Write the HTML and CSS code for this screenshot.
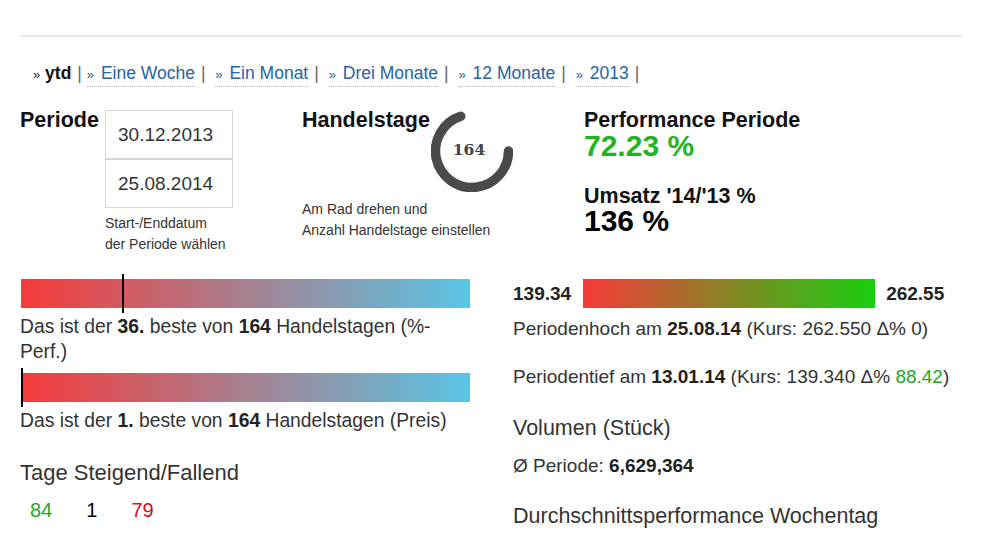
FILE: index.html
```html
<!DOCTYPE html>
<html lang="de">
<head>
<meta charset="utf-8">
<title>Performance Periode</title>
<link rel="stylesheet" href="styles.css">
</head>
<body>
<div class="page">
  <div class="rule"></div>

  <nav class="ranges">
    <span class="current"><span class="raquo">»</span> <b>ytd</b></span><span class="sep first">|</span>
    <a href="#"><span class="raquo">»</span> Eine Woche</a><span class="sep">|</span>
    <a href="#"><span class="raquo">»</span> Ein Monat</a><span class="sep">|</span>
    <a href="#"><span class="raquo">»</span> Drei Monate</a><span class="sep">|</span>
    <a href="#"><span class="raquo">»</span> 12 Monate</a><span class="sep">|</span>
    <a href="#"><span class="raquo">»</span> 2013</a><span class="sep">|</span>
  </nav>

  <section class="top">
    <div class="col periode">
      <h2 class="head">Periode</h2>
      <div class="dates">
        <div class="date">30.12.2013</div>
        <div class="date">25.08.2014</div>
        <p class="hint">Start-/Enddatum<br>der Periode wählen</p>
      </div>
    </div>

    <div class="col trade">
      <div class="trade-head">
        <h2 class="head">Handelstage</h2>
        <svg class="knob" width="82" height="82" viewBox="0 0 82 82">
          <path d="M29.7 6.3 A36.5 36.5 0 1 0 77.5 41" fill="none" stroke="#4a4a4a" stroke-width="9.5" stroke-linecap="round"/>
          <text x="38" y="44.5" text-anchor="middle" class="knob-num">164</text>
        </svg>
      </div>
      <p class="hint">Am Rad drehen und<br>Anzahl Handelstage einstellen</p>
    </div>

    <div class="col perf">
      <h2 class="head">Performance Periode</h2>
      <div class="big green">72.23 %</div>
      <h2 class="head sub">Umsatz '14/'13 %</h2>
      <div class="big">136 %</div>
    </div>
  </section>

  <section class="bottom">
    <div class="left">
      <div class="rank-bar">
        <span class="marker" style="left: 22.5%"></span>
      </div>
      <p class="txt first">Das ist der <b>36.</b> beste von <b>164</b> Handelstagen (%-Perf.)</p>
      <div class="rank-bar second">
        <span class="marker" style="left: 0%"></span>
      </div>
      <p class="txt tight">Das ist der <b>1.</b> beste von <b>164</b> Handelstagen (Preis)</p>

      <h3 class="subhead days">Tage Steigend/Fallend</h3>
      <div class="counts">
        <span class="up">84</span>
        <span>1</span>
        <span class="down">79</span>
      </div>
    </div>

    <div class="right">
      <div class="range-row">
        <b class="lbl">139.34</b>
        <div class="range-bar"></div>
        <b class="lbl">262.55</b>
      </div>
      <p class="txt hi">Periodenhoch am <b>25.08.14</b> (Kurs: 262.550 Δ% 0)</p>
      <p class="txt lo">Periodentief am <b>13.01.14</b> (Kurs: 139.340 Δ% <span class="pos">88.42</span>)</p>
      <h3 class="subhead vol">Volumen (Stück)</h3>
      <p class="avg">Ø Periode: <b>6,629,364</b></p>
      <h3 class="subhead week">Durchschnittsperformance Wochentag</h3>
    </div>
  </section>
</div>
</body>
</html>
```

FILE: styles.css
```css
html, body {
  margin: 0;
  padding: 0;
  background: #ffffff;
}

body {
  font-family: "Liberation Sans", Arial, Helvetica, sans-serif;
  color: #333333;
}

.page {
  width: 942px;
  padding: 35px 0 0 20px;
}

.rule {
  height: 2px;
  background: #e8e8e8;
}

/* ---------- range navigation ---------- */
.ranges {
  margin-top: 26px;
  padding-left: 13px;
  font-size: 17.5px;
  line-height: 20px;
  white-space: nowrap;
  color: #222;
}

.ranges a {
  color: #2563a6;
  text-decoration: none;
  border-bottom: 1px dotted #b5b5b5;
  padding-bottom: 3px;
}

.ranges .raquo {
  font-size: 13px;
}

.ranges a .raquo {
  margin-right: 2px;
}

.ranges b {
  color: #111;
}

.ranges .sep {
  color: #666;
  margin: 0 5px 0 6px;
}

.ranges .sep.first {
  margin: 0 0 0 6px;
}

/* ---------- top section ---------- */
.top {
  display: grid;
  grid-template-columns: 282px 282px 1fr;
  margin-top: 23px;
}

.head {
  margin: 0;
  font-size: 21.5px;
  line-height: 24px;
  font-weight: bold;
  color: #111;
}

.hint {
  margin: 0;
  font-size: 14px;
  line-height: 21px;
  color: #333;
}

.periode {
  display: flex;
  align-items: flex-start;
}

.periode .head {
  width: 85px;
  flex: none;
}

.dates {
  margin-top: 2px;
  width: 128px;
}

.date {
  box-sizing: border-box;
  height: 49px;
  border: 1px solid #d6d6d6;
  padding-left: 12px;
  line-height: 47px;
  font-size: 19px;
  color: #333;
}

.dates .hint {
  margin-top: 5px;
}

.trade-head {
  display: flex;
  align-items: flex-start;
}

.knob {
  display: block;
  margin-left: 1px;
  margin-top: 2px;
}

.knob-num {
  font-family: "DejaVu Serif", "Liberation Serif", serif;
  font-weight: bold;
  font-size: 15.5px;
  fill: #444;
}

.trade .hint {
  margin-top: 7px;
}

.big {
  font-size: 30px;
  line-height: 28px;
  font-weight: bold;
  color: #000;
}

.green {
  color: #1fb51f;
}

.perf .sub {
  margin-top: 25px;
  line-height: 22px;
}

/* ---------- bottom section ---------- */
.bottom {
  display: grid;
  grid-template-columns: 450px 1fr;
  column-gap: 43px;
  margin-top: 24px;
}

.rank-bar {
  position: relative;
  margin-left: 1px;
  width: 449px;
  height: 29px;
  background: linear-gradient(to right, #f63a3a, #58c6e6);
}

.rank-bar.second {
  margin-top: 9px;
}

.marker {
  position: absolute;
  top: -5px;
  bottom: -5px;
  width: 2px;
  background: #000;
}

.txt {
  margin: 6px 0 0;
  font-size: 19.3px;
  line-height: 25px;
  color: #333;
}

.txt b {
  color: #222;
}

.txt.tight {
  margin-top: 6px;
}

.subhead {
  margin: 0;
  font-size: 22px;
  line-height: 26px;
  font-weight: normal;
  color: #333;
}

.subhead.days {
  margin-top: 27px;
}

.counts {
  display: flex;
  gap: 34px;
  margin-top: 12px;
  padding-left: 10px;
  font-size: 20px;
  line-height: 24px;
  color: #000;
}

.counts .up {
  color: #22a622;
}

.counts .down {
  color: #cc1424;
}

.range-row {
  display: flex;
  align-items: center;
  height: 29px;
}

.range-row .lbl {
  font-size: 19px;
  color: #222;
}

.range-bar {
  width: 292px;
  height: 29px;
  margin: 0 11px 0 12px;
  background: linear-gradient(to right, #f63a3a, #18cf10);
}

.right .txt {
  font-size: 19px;
}

.txt.hi {
  margin-top: 8px;
}

.txt.lo {
  margin-top: 23px;
}

.pos {
  color: #25a825;
}

.subhead.vol {
  margin-top: 26px;
  font-size: 21.5px;
}

.avg {
  margin: 13px 0 0;
  font-size: 19px;
  line-height: 24px;
  color: #333;
}

.avg b {
  color: #222;
}

.subhead.week {
  margin-top: 25px;
  font-size: 21.5px;
}
```
